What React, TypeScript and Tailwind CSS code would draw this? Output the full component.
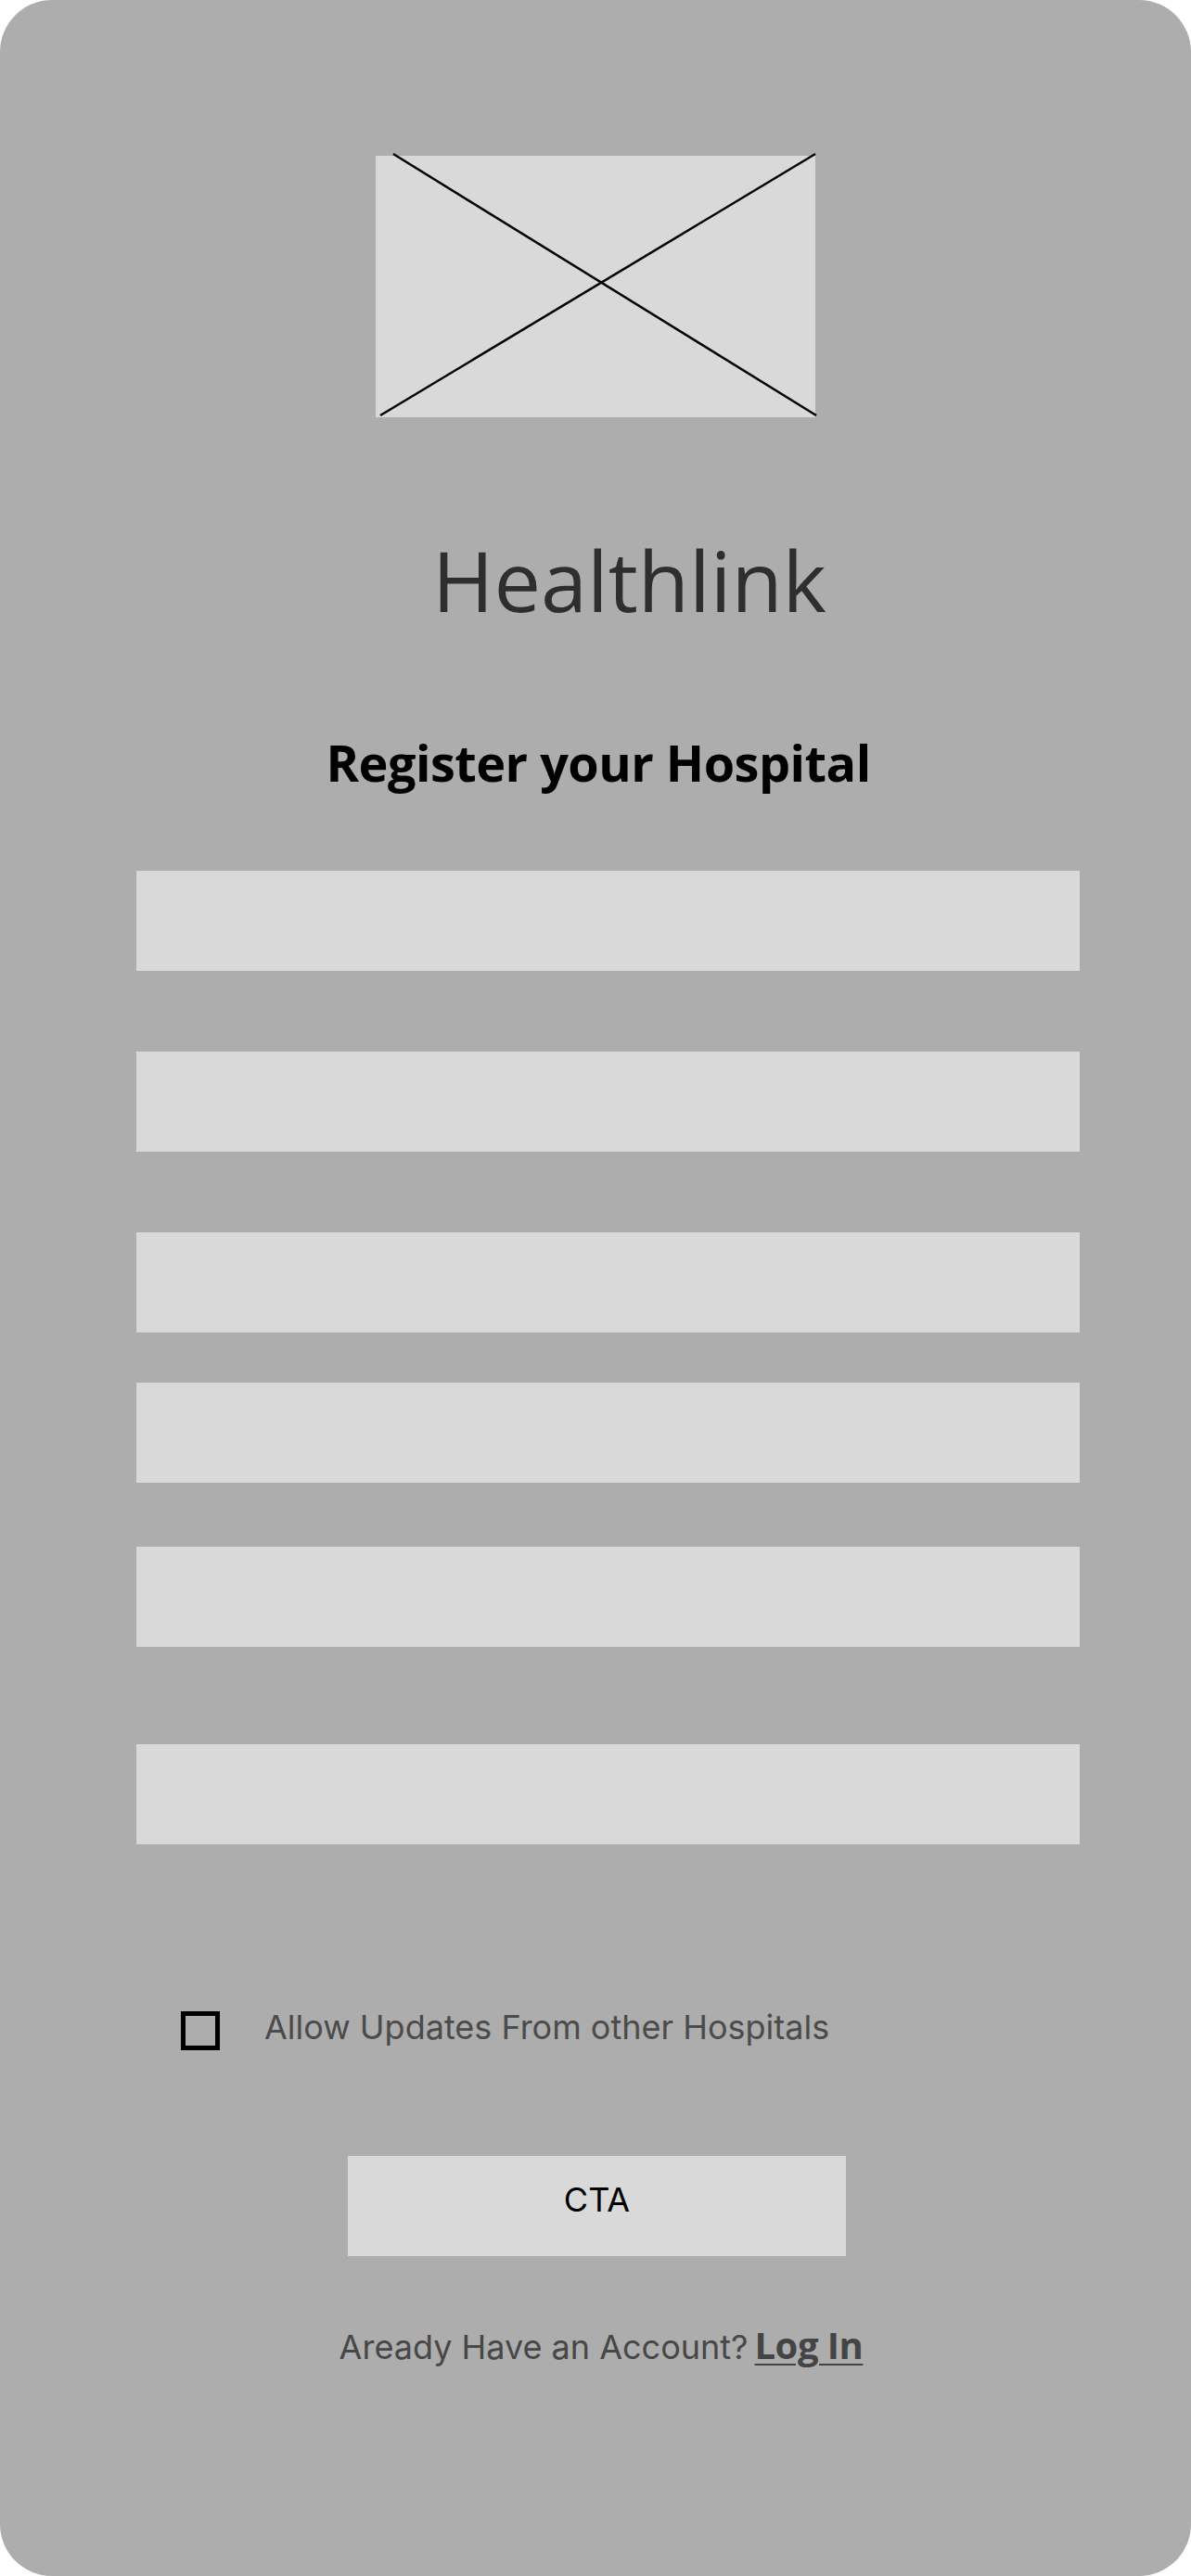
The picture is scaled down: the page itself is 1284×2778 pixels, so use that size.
import React from "react";

const FIELDS = ["hospital-name", "email", "phone", "address", "password", "confirm-password"];

// spacing above each field, in px, taken from the mock
const FIELD_GAPS = ["mt-[90px]", "mt-[87px]", "mt-[87px]", "mt-[54px]", "mt-[69px]", "mt-[105px]"];

function ImagePlaceholder() {
  return (
    <div className="relative mx-auto w-[474px] h-[282px] bg-[#d9d9d9]">
      <svg
        className="absolute inset-0 overflow-visible"
        width="474"
        height="282"
        viewBox="0 0 474 282"
      >
        <line x1="19" y1="-2" x2="475" y2="280" stroke="#000" strokeWidth="2.5" />
        <line x1="474" y1="-2" x2="5" y2="280" stroke="#000" strokeWidth="2.5" />
      </svg>
    </div>
  );
}

export default function App() {
  return (
    <div className="w-[1284px] h-[2778px] bg-white">
      <div className="w-full h-full bg-[#adadad] rounded-[56px] pt-[168px] font-['Inter',sans-serif]">
        <ImagePlaceholder />

        {/* brand */}
        <div className="mt-[130px] flex justify-center pl-[73px]">
          <h1 className="font-['Open_Sans',sans-serif] text-[90px] leading-none font-normal text-[#2e2e2e]">
            Healthlink
          </h1>
        </div>

        <div className="mt-[125px] flex justify-center pl-[6px]">
          <h2 className="font-['Open_Sans',sans-serif] text-[54px] leading-none font-bold text-black tracking-[-0.5px]">
            Register your Hospital
          </h2>
        </div>

        {/* form fields */}
        <div className="flex flex-col">
          {FIELDS.map((f, i) => (
            <input
              key={f}
              name={f}
              aria-label={f}
              className={`${FIELD_GAPS[i]} ml-[147px] w-[1017px] h-[108px] bg-[#d9d9d9] outline-none border-0`}
            />
          ))}
        </div>

        {/* checkbox */}
        <label className="mt-[179px] ml-[195px] flex items-start gap-[48px]">
          <span className="mt-[1px] w-[42px] h-[42px] border-[5px] border-black shrink-0" />
          <span className="text-[36px] leading-none text-[#4b4b4b]">
            Allow Updates From other Hospitals
          </span>
        </label>

        <button className="mt-[114px] ml-[375px] w-[537px] h-[108px] bg-[#d9d9d9] flex justify-center items-start pt-[29px]">
          <span className="text-[36px] leading-none text-black">CTA</span>
        </button>

        <div className="mt-[76px] flex justify-center items-baseline pl-[12px] leading-none">
          <span className="text-[36px] text-[#474747]">Aready Have an Account?</span>
          <a
            href="#"
            className="ml-[7px] font-['Open_Sans',sans-serif] text-[40px] font-bold text-[#444] underline decoration-2 underline-offset-[5px] tracking-[-0.5px]"
          >
            Log In
          </a>
        </div>
      </div>
    </div>
  );
}
